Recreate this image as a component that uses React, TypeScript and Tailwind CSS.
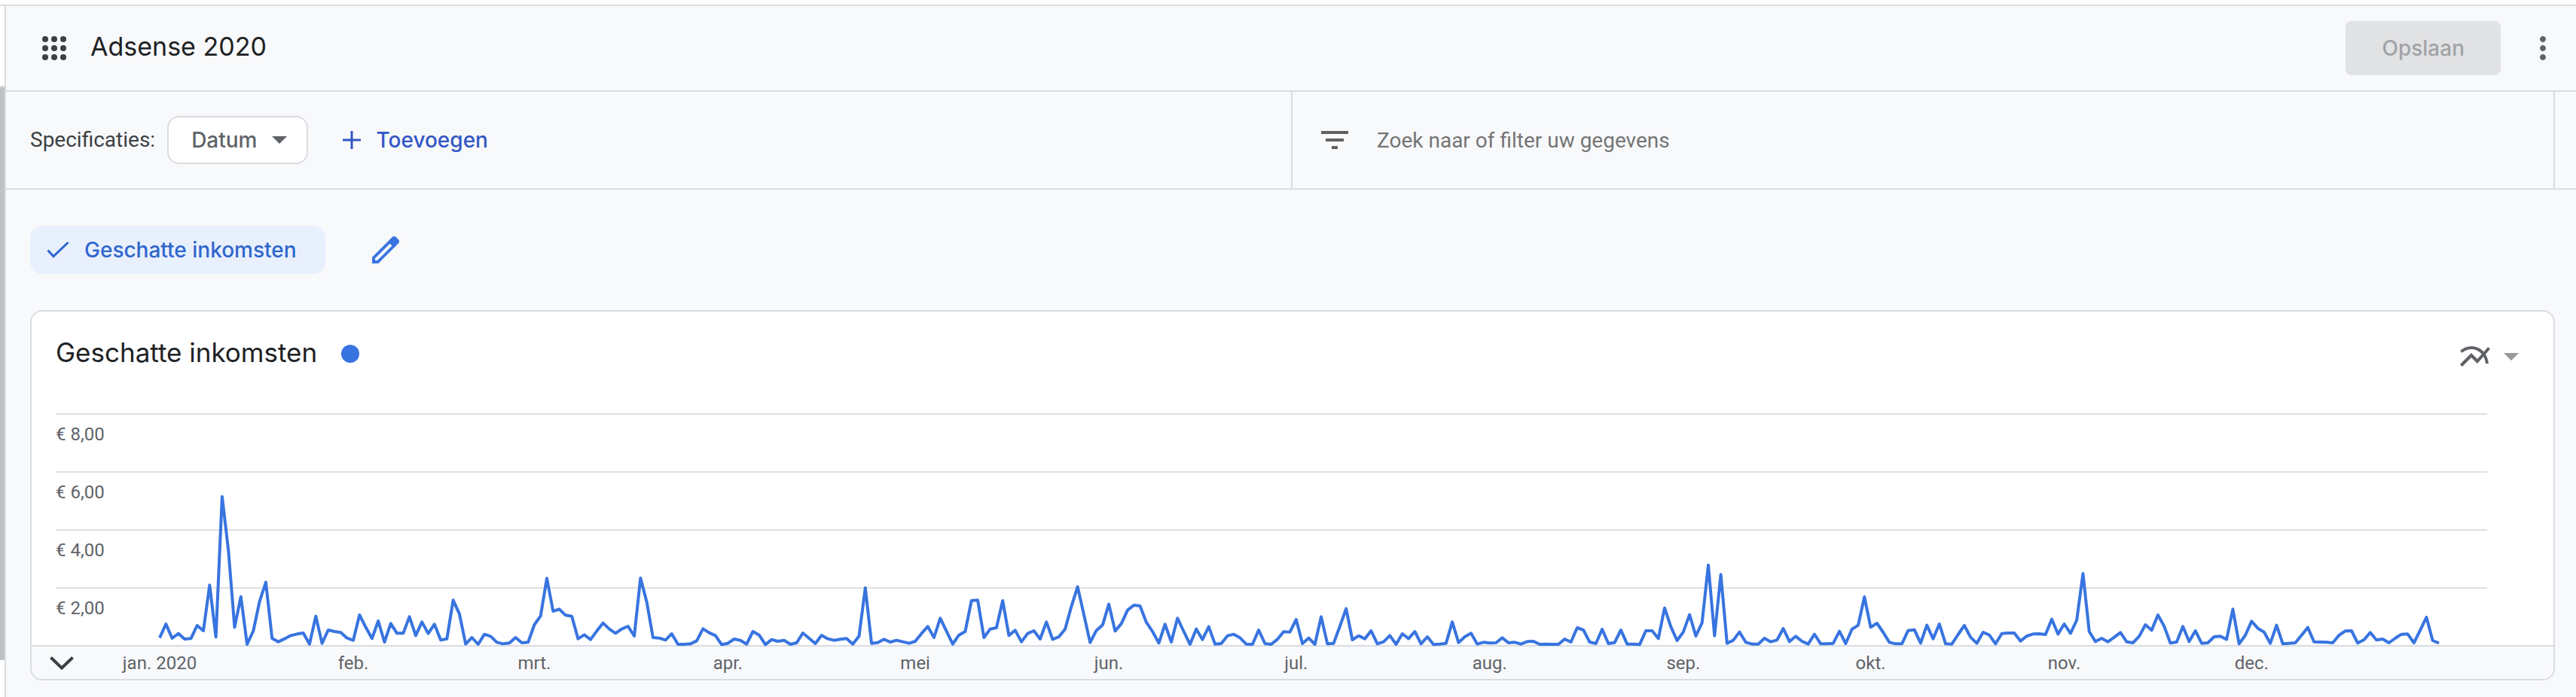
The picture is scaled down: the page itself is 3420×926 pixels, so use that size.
import { MdFilterList, MdMoreVert, MdMultilineChart } from "react-icons/md";

// Vertical position of every day of 2020 on a scale where AXIS is € 0,00
// and UNITS_PER_STEP separates two grid lines (€ 2,00).
const AXIS = 354;
const UNITS_PER_STEP = 231;
const STEPS = 4;
const DAILY = [
  325, 270, 327, 308, 330, 328, 276, 297, 115, 322, -238, -25, 283, 161, 351, 297, 180, 104, 327, 341, 329, 316, 310,
  306, 350, 239, 347, 294, 300, 304, 326, 335, 234, 283, 328, 258, 342, 268, 307, 307, 241, 316, 262, 308, 271, 334,
  329, 175, 230, 350, 324, 351, 311, 319, 343, 349, 346, 324, 345, 343, 273, 238, 88, 219, 211, 235, 239, 329, 313,
  332, 298, 266, 290, 307, 290, 279, 318, 87, 182, 324, 326, 334, 309, 351, 351, 349, 337, 289, 305, 316, 352, 347,
  330, 335, 350, 300, 314, 352, 332, 339, 335, 351, 345, 306, 327, 348, 315, 329, 335, 331, 328, 350, 318, 126, 347,
  344, 331, 342, 335, 341, 347, 339, 308, 280, 324, 247, 299, 350, 314, 300, 177, 175, 324, 290, 285, 177, 316, 295,
  341, 308, 297, 330, 262, 331, 321, 290, 200, 122, 232, 344, 296, 274, 191, 298, 269, 215, 195, 198, 263, 300, 346,
  271, 342, 247, 300, 351, 290, 332, 281, 350, 348, 317, 311, 325, 350, 351, 294, 348, 351, 331, 301, 302, 252, 348,
  326, 351, 241, 349, 347, 279, 209, 333, 317, 329, 297, 349, 341, 316, 351, 309, 328, 300, 349, 321, 352, 350, 347,
  262, 344, 321, 307, 350, 343, 346, 345, 325, 345, 343, 350, 340, 339, 351, 350, 351, 351, 330, 342, 285, 294, 342,
  348, 291, 348, 344, 294, 350, 350, 352, 297, 297, 328, 206, 281, 336, 302, 233, 318, 265, 35, 317, 73, 347, 335,
  302, 343, 350, 350, 327, 341, 334, 288, 340, 319, 339, 350, 311, 349, 349, 347, 299, 348, 291, 275, 162, 283, 267,
  303, 343, 349, 349, 296, 293, 346, 275, 329, 270, 349, 350, 312, 276, 323, 347, 303, 314, 349, 308, 306, 306, 338,
  318, 310, 309, 312, 251, 310, 270, 307, 255, 69, 300, 340, 327, 341, 323, 304, 341, 345, 319, 273, 295, 234, 279,
  346, 342, 280, 340, 297, 347, 345, 321, 319, 331, 211, 349, 315, 259, 287, 302, 347, 275, 349, 347, 345, 315, 284,
  341, 342, 343, 345, 315, 298, 297, 346, 333, 304, 334, 330, 345, 327, 311, 310, 345, 295, 243, 336, 346,
];

const MONTHS: { label: string; days: number }[] = [
  { label: "jan. 2020", days: 31 },
  { label: "feb.", days: 29 },
  { label: "mrt.", days: 31 },
  { label: "apr.", days: 30 },
  { label: "mei", days: 31 },
  { label: "jun.", days: 30 },
  { label: "jul.", days: 31 },
  { label: "aug.", days: 31 },
  { label: "sep.", days: 30 },
  { label: "okt.", days: 31 },
  { label: "nov.", days: 30 },
  { label: "dec.", days: 30 },
];

const SCALE_TOP = AXIS - UNITS_PER_STEP * STEPS;
const SCALE_HEIGHT = UNITS_PER_STEP * STEPS;
const points = DAILY.map((v, day) => `${day},${v - SCALE_TOP}`).join(" ");

function AppsIcon() {
  return (
    <svg viewBox="0 0 24 24" className="size-12" fill="currentColor" aria-hidden="true">
      {[6, 12, 18].map((y) => [6, 12, 18].map((x) => <circle key={`${x}-${y}`} cx={x} cy={y} r="2" />))}
    </svg>
  );
}

function Caret({ className }: { className: string }) {
  return (
    <svg viewBox="0 0 20 10" className={`h-[10px] w-5 ${className}`} fill="currentColor" aria-hidden="true">
      <path d="M0 0h20L10 10z" />
    </svg>
  );
}

function Header() {
  return (
    <header className="flex items-center justify-between border-b-2 border-[#dadce0] py-5 pr-5 pl-10">
      <div className="flex items-center gap-6">
        <button type="button" aria-label="Menu" className="text-[#3c4043]">
          <AppsIcon />
        </button>
        <h1 className="pb-1 text-[34px] leading-10 text-[#202124]">Adsense 2020</h1>
      </div>
      <div className="flex items-center gap-8">
        <button
          type="button"
          disabled
          className="h-[72px] rounded-lg bg-[#e1e2e4] px-12 text-[28px] leading-10 font-medium text-[#a1a3a6]"
        >
          Opslaan
        </button>
        <button type="button" aria-label="Meer opties" className="text-[#5f6368]">
          <MdMoreVert className="size-12" />
        </button>
      </div>
    </header>
  );
}

function Toolbar() {
  return (
    <div className="flex h-[130px] border-b-2 border-[#dadce0]">
      <div className="flex w-1/2 shrink-0 items-center pl-8">
        <span className="font-[Roboto,sans-serif] text-[28px] text-[#3c4043]">Specificaties:</span>
        <button
          type="button"
          className="ml-4 flex h-16 items-center gap-5 rounded-2xl border-2 border-[#dadce0] bg-white pr-[26px] pl-[30px] text-[28px] font-medium text-[#5f6368]"
        >
          Datum
          <Caret className="text-[#5f6368]" />
        </button>
        <button type="button" className="ml-[46px] flex items-center gap-5 text-[28px] font-medium text-[#3257c5]">
          <svg viewBox="0 0 24 24" className="size-6" stroke="currentColor" strokeWidth="3" aria-hidden="true">
            <path d="M12 0v24M0 12h24" />
          </svg>
          Toevoegen
        </button>
      </div>
      <label className="mr-7 flex flex-1 items-center gap-8 border-x-2 border-[#dadce0] pl-8 text-[#616161]">
        <MdFilterList className="size-12 shrink-0" />
        <input
          type="text"
          aria-label="Zoek naar of filter uw gegevens"
          placeholder="Zoek naar of filter uw gegevens"
          className="h-16 flex-1 bg-transparent font-[Roboto,sans-serif] text-[28px] outline-none placeholder:text-[#757575]"
        />
      </label>
    </div>
  );
}

function MetricBar() {
  return (
    <div className="flex items-center gap-14 pt-12 pl-8">
      <button
        type="button"
        aria-pressed="true"
        className="flex h-16 items-center gap-5 rounded-2xl bg-[#e8f0fe] pr-[38px] pl-[22px] text-[28px] font-medium text-[#2f66cc]"
      >
        <svg viewBox="0 0 30 24" className="h-6 w-[30px]" fill="none" stroke="currentColor" strokeWidth="3" aria-hidden="true">
          <path d="M1.500 12.500l7.500 8L28.500 2" />
        </svg>
        Geschatte inkomsten
      </button>
      <button type="button" aria-label="Statistieken bewerken" className="text-[#3974e0]">
        <svg viewBox="0 0 24 24" className="size-12" fill="currentColor" aria-hidden="true">
          <path
            fillRule="evenodd"
            d="M20.410 4.940l-1.350-1.350c-.78-.78-2.050-.78-2.830 0L3 16.820V21h4.180L20.410 7.770c.79-.78.79-2.050 0-2.830zM6.410 19.060L5 19v-1.360l9.820-9.820 1.410 1.410z"
          />
        </svg>
      </button>
    </div>
  );
}

function ChartCard() {
  return (
    <section className="mt-12 mr-7 ml-8 overflow-hidden rounded-2xl border-2 border-[#dadce0] bg-white">
      <div className="flex h-[135px] items-start justify-between pt-8 pr-[46px] pl-8">
        <div className="flex items-center gap-8">
          <h2 className="pb-1 text-[35px] leading-[44px] text-[#202124]">Geschatte inkomsten</h2>
          <span className="size-6 rounded-full bg-[#3874e0]" />
        </div>
        <button type="button" aria-label="Grafiektype" className="flex items-center gap-[14px] pt-1 text-[#5f6368]">
          <MdMultilineChart className="size-12" />
          <Caret className="text-[#999999]" />
        </button>
      </div>

      <div className="relative">
        <ul className="mr-[88px] ml-8 font-[Roboto,sans-serif] text-2xl leading-7 text-[#5f6368]">
          {["€ 8,00", "€ 6,00", "€ 4,00", "€ 2,00"].map((label) => (
            <li key={label} className="h-[77px] border-t-2 border-[#e0e0e0] pt-3">
              {label}
            </li>
          ))}
        </ul>
        <div className="absolute inset-y-0 right-[152px] left-[170px]">
          <svg
            viewBox={`0 0 365 ${SCALE_HEIGHT}`}
            preserveAspectRatio="none"
            className="h-full w-full overflow-visible"
            role="img"
            aria-label="Geschatte inkomsten per dag"
          >
            <polyline
              points={points}
              fill="none"
              stroke="#3874e0"
              strokeWidth="4"
              strokeLinejoin="round"
              vectorEffect="non-scaling-stroke"
            />
          </svg>
        </div>
      </div>

      <div className="flex h-[45px] items-center border-t-2 border-[#dadce0] bg-[#f8f9fb] pr-[152px]">
        <div className="flex w-[170px] shrink-0 pl-6">
          <button type="button" aria-label="Uitvouwen" className="text-[#3c4043]">
            <svg viewBox="0 0 32 18" className="h-[18px] w-8" fill="none" stroke="currentColor" strokeWidth="4" aria-hidden="true">
              <path d="M1.500 1.500L16 15.500 30.500 1.500" />
            </svg>
          </button>
        </div>
        <ol className="flex flex-1 font-[Roboto,sans-serif] text-2xl leading-7 whitespace-nowrap text-[#5f6368]">
          {MONTHS.map(({ label, days }) => (
            <li key={label} className="flex min-w-0 basis-0" style={{ flexGrow: days }}>
              <span className="flex w-0 justify-center">{label}</span>
            </li>
          ))}
        </ol>
      </div>
    </section>
  );
}

export default function App() {
  return (
    <div className="flex min-h-screen flex-col bg-white pt-[6px] font-[Inter,sans-serif]">
      <div className="flex flex-1 border-t-2 border-[#dadce0]">
        <div className="w-[6px] shrink-0 pt-[106px]">
          <div className="h-[763px] border-t-2 border-[#dadce0] bg-[#bdc1c6]" />
        </div>
        <main className="min-w-0 flex-1 border-l-2 border-[#dadce0] bg-[#f8f9fb]">
          <Header />
          <Toolbar />
          <MetricBar />
          <ChartCard />
        </main>
      </div>
    </div>
  );
}
